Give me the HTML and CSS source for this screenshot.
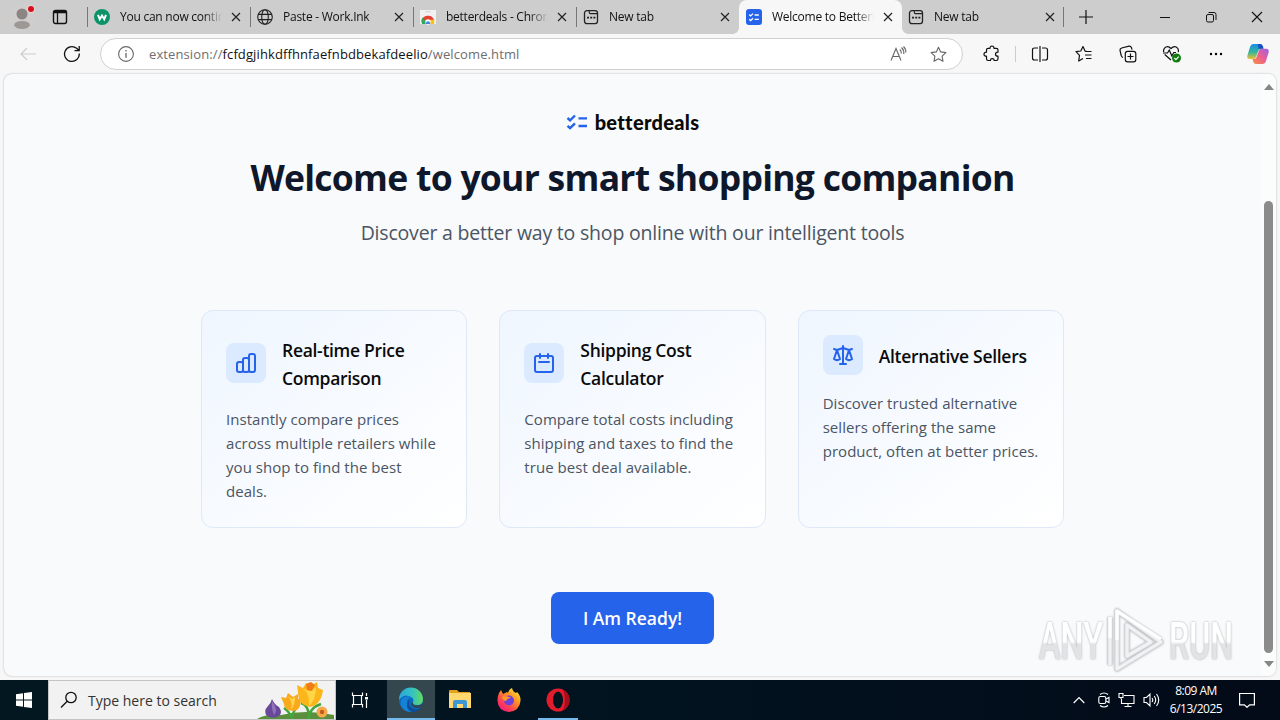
FILE: index.html
```html
<!DOCTYPE html>
<html lang="en">
<head>
  <meta charset="UTF-8">
  <meta name="viewport" content="width=device-width, initial-scale=1.0">
  <title>Welcome to BetterDeals</title>
  <link rel="stylesheet" href="styles.css">
</head>
<body>
  <!-- icons used more than once -->
  <svg class="defs" width="0" height="0">
    <symbol id="close" viewBox="0 0 10 10"><path d="M1 1l8 8M9 1l-8 8" fill="none" stroke="#222" stroke-width="1.2"/></symbol>
    <symbol id="newtab" viewBox="0 0 16 16"><rect x="1.5" y="1.7" width="13" height="13" rx="2.4" fill="none" stroke="#222" stroke-width="1.3"/><path d="M6.3 2v1.6q0 1 1 1H14" fill="none" stroke="#222" stroke-width="1.1"/><path d="M4 8.7h2M7.2 8.7h2M10.4 8.7h2" stroke="#222" stroke-width="1.8"/></symbol>
    <symbol id="checks" viewBox="0 0 22 16"><path d="M1.5 4l2.6 2.3L9 1.5M1.5 11.8l2.6 2.3L9 9.3M12.5 4.4H21M12.5 12H21" fill="none" stroke="currentColor" stroke-width="2.4"/></symbol>
  </svg>

  <header class="tabs">
    <div class="profile">
      <svg width="28" height="28" viewBox="0 0 28 28"><circle cx="14" cy="14" r="13" fill="#d0cecd"/><circle cx="14" cy="11" r="5.5" fill="#8b8683"/><path d="M6 22.5q0-4.5 8-4.5t8 4.5q-2.5 3.5-8 3.5t-8-3.5z" fill="#9d9894"/><circle cx="23" cy="6" r="4.2" fill="#e0d3d3"/><circle cx="23" cy="6" r="3" fill="#d8101c"/></svg>
    </div>
    <svg class="workspace" width="16" height="16" viewBox="0 0 16 16"><rect x="1.500" y="1.500" width="13" height="13" rx="2" fill="none" stroke="#111" stroke-width="1.400"/><path d="M1.500 3h13" stroke="#111" stroke-width="2.500"/><path d="M5.500 4v10" stroke="#111" stroke-width="1.300"/></svg>
    <div class="tab">
      <svg width="16" height="16" viewBox="0 0 16 16"><circle cx="8" cy="8" r="8" fill="#0b9367"/><path d="M4 5.8l1.8 4.5L8 6.6l2.2 3.7L12 5.800" fill="none" stroke="#fff" stroke-width="2"/></svg>
      <span>You can now continue</span>
      <svg class="x" width="10" height="10"><use href="#close"/></svg>
    </div>
    <div class="tab">
      <svg width="16" height="16" viewBox="0 0 16 16" fill="none" stroke="#222" stroke-width="1.1"><circle cx="8" cy="8" r="7.3"/><ellipse cx="8" cy="8" rx="3.3" ry="7.3"/><path d="M1.3 5.4h13.4M1.3 10.6h13.4"/></svg>
      <span>Paste - Work.Ink</span>
      <svg class="x" width="10" height="10"><use href="#close"/></svg>
    </div>
    <div class="tab">
      <svg width="16" height="16" viewBox="0 0 16 16"><path d="M0 1h16v14H0z" fill="#f1f1f1"/><path d="M5.5 2.7h5" stroke="#d0d0d0"/><path d="M1.500 13a6.500 6.500 0 0 1 12.600-2H8z" fill="#e34133"/><path d="M1.600 13a6.500 6.500 0 0 1 .9-4.500L6 12.500V15H2z" fill="#34a853"/><path d="M14.100 10.800q.6 2-.2 4.200H8.500l2-4.200z" fill="#fbc116"/><circle cx="8" cy="13" r="2.700" fill="#fff"/><path d="M5.900 15a2.200 2.200 0 1 1 4.200 0z" fill="#4285f4"/></svg>
      <span>betterdeals - Chrome</span>
      <svg class="x" width="10" height="10"><use href="#close"/></svg>
    </div>
    <div class="tab">
      <svg width="16" height="16"><use href="#newtab"/></svg>
      <span>New tab</span>
      <svg class="x" width="10" height="10"><use href="#close"/></svg>
    </div>
    <div class="tab active">
      <svg width="16" height="16" viewBox="0 0 16 16"><rect width="16" height="16" rx="3" fill="#2563eb"/><path d="M3.200 5.600l1.400 1.300L7 4.600M3.200 10.300l1.400 1.300L7 9.300M8.600 6h4.200M8.600 10.400h4.200" fill="none" stroke="#fff" stroke-width="1.300"/></svg>
      <span>Welcome to BetterDeals</span>
      <svg class="x" width="10" height="10"><use href="#close"/></svg>
    </div>
    <div class="tab last">
      <svg width="16" height="16"><use href="#newtab"/></svg>
      <span>New tab</span>
      <svg class="x" width="10" height="10"><use href="#close"/></svg>
    </div>
    <svg class="plus" width="14" height="14" viewBox="0 0 14 14"><path d="M7 0v14M0 7h14" stroke="#111" stroke-width="1.2"/></svg>
    <div class="window-buttons">
      <svg width="12" height="12" viewBox="0 0 12 12"><path d="M1 6.500h10" stroke="#111"/></svg>
      <svg width="12" height="12" viewBox="0 0 12 12" fill="none" stroke="#111"><rect x="1.500" y="3.500" width="7" height="7.500" rx="1.500"/><path d="M3.500 1.500H9q2 0 2 2V9"/></svg>
      <svg width="12" height="12" viewBox="0 0 12 12"><path d="M1 1l10 10M11 1L1 11" stroke="#111" stroke-width="1.100"/></svg>
    </div>
  </header>

  <nav class="toolbar">
    <svg class="back" width="16" height="14" viewBox="0 0 16 14"><path d="M16 7H1M7 1L1 7l6 6" fill="none" stroke="#cdcdcd" stroke-width="1.2"/></svg>
    <svg class="reload" width="18" height="18" viewBox="0 0 18 18"><path d="M16.3 8.5A7.4 7.4 0 1 1 13.6 3.300L16 5.500M16.200 1V5.700H11.500" fill="none" stroke="#111" stroke-width="1.3"/></svg>
    <div class="address">
      <svg width="16" height="16" viewBox="0 0 16 16"><circle cx="8" cy="8" r="7.400" fill="none" stroke="#666" stroke-width="1.1"/><path d="M8 7v4.700M8 4v1.500" stroke="#666" stroke-width="1.3"/></svg>
      <p class="url">extension://<b>fcfdgjihkdffhnfaefnbdbekafdeelio</b>/welcome.html</p>
      <svg class="read" width="17" height="16" viewBox="0 0 17 16" fill="none" stroke="#666" stroke-width="1.1"><path d="M1 14.500L6 2.500l5 12M2.800 10.500h6.500M9.800 3.500q1.700 1.500 1.500 4M11.500 1.500q2.800 2.500 2.300 6.500M13.500.5q2.700 2.500 2.300 6"/></svg>
      <svg width="17" height="17" viewBox="0 0 17 17"><path d="M8.500 1.200l2.200 4.700 5.200.7-3.800 3.600.9 5.100-4.500-2.500L4 15.300l.9-5.100L1.100 6.600l5.200-.7z" fill="none" stroke="#666" stroke-width="1.100" stroke-linejoin="round"/></svg>
    </div>
    <svg class="ext" width="18" height="18" viewBox="0 0 18 18"><path d="M3.500 5q0-1.700 1.700-1.700H7Q7 1 9 1t2 2.300h2.300Q15 3.300 15 5v2.200q-2.500 0-2.500 2t2.500 2v2.600q0 1.700-1.700 1.700h-2.100q0-1.800-1.900-1.800t-1.900 1.800H5.200q-1.700 0-1.700-1.700v-2.600Q1 11.200 1 9.200t2.500-2z" fill="none" stroke="#111" stroke-width="1.200" stroke-linejoin="round"/></svg>
    <i class="divider"></i>
    <div class="tools">
      <svg width="18" height="18" viewBox="0 0 18 18" fill="none" stroke="#111" stroke-width="1.200"><path d="M7 3H3.500Q1.500 3 1.500 5v8q0 2 2 2H7M11 3h3.500q2 0 2 2v8q0 2-2 2H11M9 1v16"/></svg>
      <svg width="18" height="18" viewBox="0 0 18 18" fill="none" stroke="#111" stroke-width="1.200" stroke-linejoin="round"><path d="M11.500 6.300L10 6 8 1.500 5.800 6 1 6.700l3.500 3.600L3.700 16 8 13.500M10 6.500h6.500M10 10h6.500M11 13.500h5.500"/></svg>
      <svg width="18" height="18" viewBox="0 0 18 18" fill="none" stroke="#111" stroke-width="1.200"><rect x="6.300" y="6.300" width="10.500" height="10.500" rx="2.300"/><path d="M11.500 8.500v6M8.500 11.500h6M4 12.500Q2.500 12 2.200 10.500L1 5.500Q.8 3.500 2.700 3L10 1.200q1.900-.2 2.500 1.500l.5 2"/></svg>
      <svg width="18" height="18" viewBox="1 0 18 18" fill="none" stroke="#111" stroke-width="1.200"><path d="M9 15L2.700 9.500M1.700 7Q1 3.500 4 2q2.700-1 5 1.500Q11.500 1 14.200 2q3 1.700 2 5.200M1 8h4.500L7.300 5l2.500 6 2-3.500H14"/><circle cx="14.500" cy="13" r="4.500" fill="#107c10" stroke="none"/><path d="M12.300 13l1.600 1.600 2.800-3" stroke="#fff"/></svg>
      <svg width="18" height="18" viewBox="0 0 18 18"><circle cx="4" cy="9" r="1.200"/><circle cx="9" cy="9" r="1.200"/><circle cx="14" cy="9" r="1.200"/></svg>
    </div>
    <svg class="copilot" width="24" height="22" viewBox="0 0 24 22">
      <defs>
        <linearGradient id="cpA" x1="0" y1="0" x2="0" y2="1"><stop offset="0" stop-color="#168de5"/><stop offset=".55" stop-color="#35b69a"/><stop offset="1" stop-color="#f2c02e"/></linearGradient>
        <linearGradient id="cpB" x1="1" y1="0" x2="0" y2="1"><stop offset="0" stop-color="#9b62e8"/><stop offset=".5" stop-color="#ed5e91"/><stop offset="1" stop-color="#f7923d"/></linearGradient>
      </defs>
      <path d="M7.500 1H14q2 0 2.800 2.300l.7 2.500h-2.700q-2 0-2.700 2.500L10 14q-.7 2-2.500 2H4q-3.500 0-2.600-3.500L4 4q1-3 3.500-3z" fill="url(#cpA)"/>
      <path d="M12 1h2q2 0 2.800 2.300l.7 2.500h-5z" fill="#1751c3"/>
      <path d="M16.500 21H10q-2 0-2.700-2.300l-.8-2.700h1.700q1.900 0 2.600-2.500L12.700 8q.7-2.200 2.800-2.200H20q3.500 0 2.600 3.700L20 18q-1 3-3.500 3z" fill="url(#cpB)"/>
    </svg>
  </nav>

  <div class="viewport">
    <main class="page">
      <div class="logo">
        <svg width="22" height="16"><use href="#checks"/></svg>
        <span>betterdeals</span>
      </div>
      <h1>Welcome to your smart shopping companion</h1>
      <p class="subtitle">Discover a better way to shop online with our intelligent tools</p>

      <section class="features">
        <article class="card">
          <div class="card-head">
            <div class="icon"><svg width="24" height="24" viewBox="0 0 24 24"><path d="M9 19v-6a2 2 0 00-2-2H5a2 2 0 00-2 2v6a2 2 0 002 2h2a2 2 0 002-2zm0 0V9a2 2 0 012-2h2a2 2 0 012 2v10m-6 0a2 2 0 002 2h2a2 2 0 002-2m0 0V5a2 2 0 012-2h2a2 2 0 012 2v14a2 2 0 01-2 2h-2a2 2 0 01-2-2z"/></svg></div>
            <h2>Real-time Price<br>Comparison</h2>
          </div>
          <p>Instantly compare prices<br>across multiple retailers while<br>you shop to find the best<br>deals.</p>
        </article>
        <article class="card">
          <div class="card-head">
            <div class="icon"><svg width="24" height="24" viewBox="0 0 24 24"><path d="M8 3v4M16 3v4M7 11h10M5 21h14a2 2 0 002-2V7a2 2 0 00-2-2H5a2 2 0 00-2 2v12a2 2 0 002 2z"/></svg></div>
            <h2>Shipping Cost<br>Calculator</h2>
          </div>
          <p>Compare total costs including<br>shipping and taxes to find the<br>true best deal available.</p>
        </article>
        <article class="card">
          <div class="card-head">
            <div class="icon"><svg width="24" height="24" viewBox="0 0 24 24"><path d="M3 6l3 1m0 0l-3 9a5.002 5.002 0 006.001 0M6 7l3 9M6 7l6-2m6 2l3-1m-3 1l-3 9a5.002 5.002 0 006.001 0M18 7l3 9m-3-9l-6-2m0-2v2m0 16V5m0 16H9m3 0h3"/></svg></div>
            <h2>Alternative Sellers</h2>
          </div>
          <p>Discover trusted alternative<br>sellers offering the same<br>product, often at better prices.</p>
        </article>
      </section>

      <button class="ready">I Am Ready!</button>
    </main>
    <div class="scrollbar">
      <i class="up"></i>
      <i class="thumb"></i>
      <i class="down"></i>
    </div>
  </div>

  <svg class="watermark" width="204" height="70" viewBox="0 0 204 70">
    <defs>
      <linearGradient id="wm" x1="0" y1="0" x2="0" y2="1"><stop offset=".5" stop-color="#fff"/><stop offset=".55" stop-color="#e2e3e5"/></linearGradient>
    </defs>
    <text x="4" y="53" textLength="64" lengthAdjust="spacingAndGlyphs">ANY</text>
    <text x="134" y="53" textLength="64" lengthAdjust="spacingAndGlyphs">RUN</text>
    <g fill="none" stroke-linejoin="round">
      <path d="M82 5v58l44-27zM92 19v31l24-14zM75 11v48" stroke="#d3d5d8" stroke-width="5"/>
      <path d="M82 5v58l44-27zM92 19v31l24-14zM75 11v48" stroke="#f1f2f3" stroke-width="3.200"/>
      <path d="M75 32V11M82 34V5l44 28" stroke="#fff" stroke-width="3.200"/>
    </g>
  </svg>

  <footer class="taskbar">
    <div class="start"><svg width="16" height="16" viewBox="0 0 16 16"><path d="M0 2.200L7 1.200v6.300H0zM8 1l8-1v7.500H8zM0 8.500h7v6.300l-7-1zM8 8.500h8V16l-8-1z" fill="#fff"/></svg></div>
    <div class="search">
      <svg width="18" height="18" viewBox="0 0 18 18"><circle cx="11" cy="6.500" r="5.200" fill="none" stroke="#111" stroke-width="1.300"/><path d="M7.200 10.300L1 16.500" stroke="#111" stroke-width="1.300"/></svg>
      <span>Type here to search</span>
      <svg class="flowers" width="80" height="38" viewBox="0 0 80 38">
        <path d="M2 38Q12 32 26 34 50 28 79 34v4z" fill="#5c8f3d"/>
        <path d="M37 38q-2-7-8-11M37 38q0-6 5-12M54 38q0-14-8-16M54 38q0-11 12-15" fill="none" stroke="#45a53c" stroke-width="2.500"/>
        <path d="M17 18q2 5 7 8 4 6 0 9-6 3-12 0-4-5 1-10 3-3 4-7z" fill="#67489a"/><path d="M17 20q-1 7 2 14 5-5-2-14z" fill="#9272b8"/>
        <path d="M26 16l5 1 2-5 5 4 5-3v5l3-1q0 13-8 13-9-1-9-7z" fill="#f9a91b"/><path d="M33 15q5 6 3 14 5-7 4-13l-3 2z" fill="#ffd34a"/>
        <path d="M42 4l6 3 3-5 5 3 6-4 1 6 5 2q-2 15-13 17-12-2-12-15z" fill="#fdb51c"/><path d="M48 8q7 4 6 17 7-6 7-19l-6 4z" fill="#ffd644"/><path d="M51 3l5-2 4 3-3 6-5-1z" fill="#f17b16"/>
        <circle cx="67" cy="31" r="5.500" fill="#f6a94a"/><circle cx="67" cy="31" r="2.200" fill="#c25b17"/>
      </svg>
    </div>
    <div class="task"><svg width="18" height="18" viewBox="0 0 18 18" fill="none" stroke="#fff" stroke-width="1.200"><path d="M1.500 1.500v3h10v-3M1.500 16.500v-3h10v3M2.500 4.500h8v9h-8zM15.500 2v3M15.500 9v8"/><path d="M14 6h3v2.500h-3z" fill="#fff" stroke="none"/></svg></div>
    <div class="task current">
      <svg width="26" height="26" viewBox="0 0 26 26">
        <defs><linearGradient id="edT" x1="0" y1="0" x2="1" y2="0"><stop offset="0" stop-color="#2ca5dd"/><stop offset=".55" stop-color="#34c3c0"/><stop offset="1" stop-color="#65d962"/></linearGradient></defs>
        <circle cx="13" cy="13" r="12" fill="#0b6bbd"/>
        <path d="M1 13A12 12 0 0 1 25 12q0 6-6 6-5 0-4-3 1.500-2-.5-4Q7 5 1 13z" fill="url(#edT)"/>
        <path d="M14.500 11q-4-2-5.500 3-1 8 6 10.500Q8 26 4 20.500 0 13 7 10q5-2 7.500 1z" fill="#1582d5"/>
        <path d="M12 13q-3 5 2 8 5 3 9.500-1.500-3 5.500-9.500 5.500-6-3-5-8 1-4 3-4z" fill="#0c4e97"/>
        <path d="M14.800 15q-.5 3.500 4.200 3.500 3.500 0 6-2l1 3-3 .3q-4 2.500-8 .2-4-3.500-.2-5z" fill="#34474f"/>
      </svg>
    </div>
    <div class="task"><svg width="24" height="22" viewBox="0 0 24 22"><path d="M1 2q0-1 1-1h7l2 2h11v4H1z" fill="#e6a11b"/><path d="M1 4h22v15H1z" fill="#ffd870"/><path d="M5 19v-6q0-2 2-2h10q2 0 2 2v6h-4v-4H9v4z" fill="#3d97d3"/></svg></div>
    <div class="task">
      <svg width="26" height="26" viewBox="0 0 26 26">
        <defs><linearGradient id="ff" x1="1" y1="0" x2=".2" y2="1"><stop offset="0" stop-color="#fff24a"/><stop offset=".4" stop-color="#ff9b22"/><stop offset=".75" stop-color="#ff3e53"/><stop offset="1" stop-color="#ee1984"/></linearGradient></defs>
        <path d="M3 6l2-3 2 4 4-2 1 1q1-4 4-5 1 4 4 5l1-1q4 4 3.500 9-1 10-11.500 11Q2 24 1.500 14 1.500 9 3 6z" fill="url(#ff)"/>
        <circle cx="13" cy="13.500" r="5" fill="#713fda"/><path d="M6 10q4-2 9 1-4 0-5 3-3 0-4-4z" fill="#ff9824"/>
      </svg>
    </div>
    <div class="task running"><svg width="24" height="24" viewBox="0 0 24 24"><ellipse cx="12" cy="12" rx="11.500" ry="11.500" fill="#e31c2d"/><path d="M16 1.200A11.500 11.500 0 0 1 16 22.800q3-3 3-10.800T16 1.200z" fill="#a70e1c"/><ellipse cx="12" cy="12" rx="5" ry="8.600" fill="#02131d"/></svg></div>
    <div class="tray">
      <svg width="12" height="8" viewBox="0 0 12 8"><path d="M.7 7L6 1.500 11.300 7" fill="none" stroke="#fff" stroke-width="1.200"/></svg>
      <svg width="12" height="16" viewBox="0 0 12 16" fill="none" stroke="#fff" stroke-width="1.100"><rect x=".8" y="4.500" width="7" height="7" rx="1.500"/><path d="M8 7l3-1.500v5L8 9M2 2.500q4-3 8 0M2 13.500q4 3 8 0"/></svg>
      <svg width="17" height="16" viewBox="0 0 17 16" fill="none" stroke="#fff" stroke-width="1.100"><path d="M6 3.500h10v8H3.500V7M6.500 14.500h7M10 11.500v3M1 1.500h4v4H1zM3 5.500V7"/></svg>
      <svg width="17" height="16" viewBox="0 0 17 16" fill="none" stroke="#fff" stroke-width="1.100"><path d="M1 5.500h2.500L7 2v12l-3.500-3.500H1zM9 6q1.500 2 0 4M11.200 4q3 4 0 8M13.500 2q4.500 6 0 12"/></svg>
      <div class="clock"><span>8:09 AM</span><span>6/13/2025</span></div>
      <svg width="16" height="16" viewBox="0 0 16 16"><path d="M.6 1.500h14.800v11.300h-4.700L8 15.300l-2.700-2.500H.6z" fill="none" stroke="#fff" stroke-width="1.200"/></svg>
    </div>
  </footer>
</body>
</html>
```
FILE: styles.css
```css
* {
  box-sizing: border-box;
}
body {
  margin: 0;
  width: 1280px;
  height: 720px;
  overflow: hidden;
  display: flex;
  flex-direction: column;
  background: #f7f7f7;
  font-family: "Open Sans", "Noto Sans", sans-serif;
  color: #111;
}
svg {
  flex: none;
  display: block;
}
.defs {
  position: absolute;
}

/* tab strip */
.tabs {
  height: 34px;
  flex: none;
  display: flex;
  align-items: center;
  background: #cdcdcd;
}
.profile {
  padding-left: 8px;
  width: 52px;
}
.workspace {
  margin-right: 19px;
}
.tab {
  width: 163px;
  height: 34px;
  padding: 0 9px 0 7px;
  display: flex;
  align-items: center;
  position: relative;
  font-size: 12px;
}
.tab::before {
  content: "";
  width: 1px;
  height: 20px;
  position: absolute;
  left: 0;
  background: #777;
}
.tab span {
  margin-left: 10px;
  width: 102px;
  height: 18px;
  line-height: 18px;
  overflow: hidden;
  white-space: nowrap;
  letter-spacing: -0.25px;
  -webkit-mask-image: linear-gradient(to right, #000 82%, transparent);
  mask-image: linear-gradient(to right, #000 82%, transparent);
}
.tab .x {
  margin-left: auto;
}
.tab.active {
  background: #f7f7f7;
  border-radius: 8px 8px 0 0;
}
/* flared bottom corners of the active tab */
.tab.active::before,
.tab.active::after {
  content: "";
  width: 6px;
  height: 6px;
  position: absolute;
  left: -6px;
  bottom: 0;
  background: radial-gradient(circle at 0 0, transparent 5.5px, #f7f7f7 6px);
}
.tab.active::after {
  left: auto;
  right: -6px;
  background: radial-gradient(circle at 100% 0, transparent 5.5px, #f7f7f7 6px);
}
.tab.last {
  width: 162px;
  padding-left: 6px;
}
.tab.last::before {
  left: auto;
  right: 0;
}
.plus {
  margin-left: 15px;
}
.window-buttons {
  margin-left: auto;
  padding-right: 17px;
  display: flex;
  gap: 34px;
}

/* toolbar */
.toolbar {
  height: 39px;
  flex: none;
  display: flex;
  align-items: center;
  padding: 1px 10px 0 20px;
}
.reload {
  margin-left: 27px;
}
.address {
  width: 863px;
  height: 32px;
  margin-left: 19px;
  padding: 0 15px 0 17px;
  display: flex;
  align-items: center;
  background: #fff;
  border: 1px solid #d0d0d0;
  border-radius: 16px;
}
.url {
  margin: 0 auto 0 15px;
  font-size: 13px;
  letter-spacing: 0.11px;
  color: #6e6e6e;
  white-space: nowrap;
}
.url b {
  font-weight: 400;
  color: #111;
}
.read {
  margin-right: 23px;
}
.ext {
  margin-left: 20px;
}
.divider {
  width: 1px;
  height: 16px;
  margin: 0 15px 0 14px;
  background: #ccc;
}
.tools {
  display: flex;
  gap: 26px;
}
.copilot {
  margin-left: auto;
}

/* page */
.viewport {
  height: 602px;
  margin: 1px 4px 0;
  flex: none;
  display: flex;
  background: #f8fafc;
  border-radius: 8px;
  box-shadow: 0 0 2px rgba(0, 0, 0, 0.3);
  overflow: hidden;
}
.page {
  width: 1257px;
  display: flex;
  flex-direction: column;
  align-items: center;
}
.logo {
  height: 24px;
  margin-top: 36px;
  display: flex;
  align-items: center;
  gap: 7px;
  color: #2563eb;
}
.logo span {
  font: 900 20px/24px Lato, sans-serif;
  font-variant-ligatures: none;
  letter-spacing: 0.3px;
  color: #0a0a0a;
}
h1 {
  margin: 23px 0 -1px;
  font-size: 35.5px;
  line-height: 40px;
  letter-spacing: -0.73px;
  color: #0f172a;
  white-space: nowrap;
}
.subtitle {
  margin: 23px 0 1px;
  font-size: 19.5px;
  line-height: 28px;
  letter-spacing: -0.2px;
  color: #4b5563;
  white-space: nowrap;
}
.features {
  width: 863px;
  margin-top: 62px;
  display: grid;
  grid-template-columns: repeat(3, 1fr);
  gap: 32px;
}
.card {
  height: 218px;
  padding: 24px;
  border: 1px solid #dfe8f8;
  border-radius: 12px;
  background: linear-gradient(to bottom right, #eff6ff, #fff);
}
.card-head {
  display: flex;
  align-items: center;
  gap: 16px;
  margin-bottom: 16px;
}
.icon {
  width: 40px;
  height: 40px;
  display: flex;
  align-items: center;
  justify-content: center;
  background: #dbeafe;
  border-radius: 8px;
}
.icon path {
  fill: none;
  stroke: #2563eb;
  stroke-width: 2;
  stroke-linecap: round;
  stroke-linejoin: round;
}
.card h2 {
  margin: 1px 0 -1px;
  font-size: 17.5px;
  font-weight: 600;
  line-height: 28px;
  letter-spacing: -0.3px;
  color: #0a0a0a;
  white-space: nowrap;
}
.card p {
  margin: 0;
  font-size: 15px;
  line-height: 24px;
  letter-spacing: 0.05px;
  color: #4b5563;
  white-space: nowrap;
}
.ready {
  width: 163px;
  height: 52px;
  margin-top: 64px;
  border: none;
  border-radius: 8px;
  background: #2563eb;
  color: #fff;
  font-family: inherit;
  font-size: 17.5px;
  font-weight: 600;
}
.scrollbar {
  width: 15px;
  display: flex;
  flex-direction: column;
  align-items: center;
  padding: 10px 0 9px;
  background: #fbfcfc;
}
.up,
.down {
  border: 5px solid transparent;
  border-top: none;
  border-bottom: 6px solid #868686;
}
.thumb {
  width: 9px;
  height: 452px;
  margin: 111px 0 8px;
  border-radius: 5px;
  background: #8b8b8b;
}
.down {
  border-bottom: none;
  border-top: 6px solid #868686;
}
.watermark {
  position: absolute;
  left: 1035px;
  top: 606px;
  filter: drop-shadow(0 0 1px rgba(0, 0, 0, 0.3));
}
.watermark text {
  font: 500 51px Roboto, sans-serif;
  fill: url(#wm);
}

/* taskbar */
.taskbar {
  height: 40px;
  margin-top: auto;
  flex: none;
  display: flex;
  background: linear-gradient(to right, #02171f, #021320 50%, #030a18);
  color: #fff;
}
.start {
  width: 48px;
  display: flex;
  align-items: center;
  justify-content: center;
}
.search {
  width: 288px;
  padding-left: 11px;
  display: flex;
  align-items: center;
  background: #f2f2f2;
  border: 1px solid #c4c4c4;
  color: #333;
  font-size: 14px;
}
.search span {
  margin-left: 10px;
  white-space: nowrap;
}
.flowers {
  margin-left: auto;
}
.task {
  width: 48px;
  margin-right: 1px;
  display: flex;
  align-items: center;
  justify-content: center;
}
.task + .current {
  margin-left: 2px;
}
.current {
  background: #34474f;
}
.current,
.running {
  box-shadow: inset 0 -2px #76b9ed;
}
.running {
  width: 40px;
  margin-left: 4px;
}
.tray {
  margin-left: auto;
  padding-right: 25px;
  display: flex;
  align-items: center;
  gap: 8px;
}
.tray > svg:first-child {
  margin-right: 5px;
}
.clock {
  width: 56px;
  margin-right: 7px;
  display: flex;
  flex-direction: column;
  align-items: center;
  font-size: 12px;
  line-height: 18px;
  letter-spacing: -0.5px;
}
```
